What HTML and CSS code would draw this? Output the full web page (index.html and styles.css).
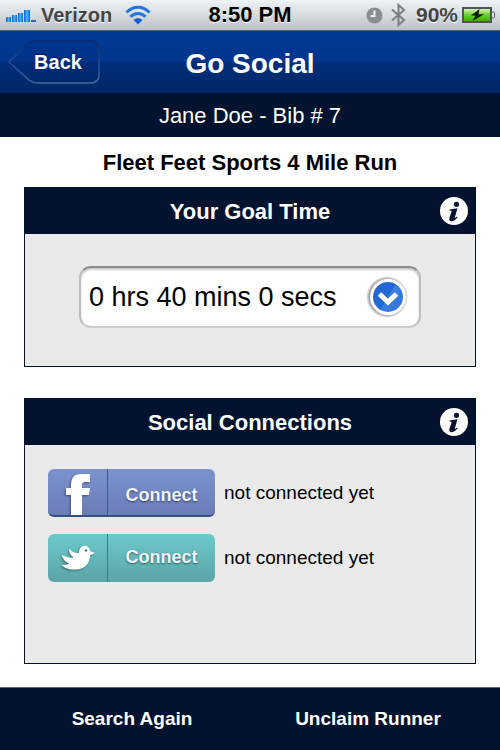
FILE: index.html
```html
<!DOCTYPE html>
<html lang="en">
  <head>
    <meta charset="UTF-8" />
    <meta name="viewport" content="width=device-width, initial-scale=1.0" />
    <title>Go Social</title>
    <link rel="stylesheet" href="styles.css">
  </head>
  <body>
    <div class="status-bar">
      <div class="status-left">
        <svg class="signal" width="32" height="16" viewBox="0 0 32 16">
          <defs>
            <linearGradient id="bars" x1="0" x2="1" y1="0" y2="0">
              <stop offset="0" stop-color="#1463c4" />
              <stop offset="0.5" stop-color="#4bb4f6" />
              <stop offset="1" stop-color="#1463c4" />
            </linearGradient>
          </defs>
          <g fill="url(#bars)">
            <rect x="1" y="10" width="5" height="5" />
            <rect x="7" y="8" width="5" height="7" />
            <rect x="13" y="6" width="5" height="9" />
            <rect x="19" y="3" width="6" height="12" />
          </g>
          <rect x="26" y="13" width="5" height="2" fill="#3566a8" />
        </svg>
        <span class="carrier">Verizon</span>
        <svg class="wifi" width="26" height="20" viewBox="0 0 26 20">
          <g fill="none" stroke="#2476dc" stroke-width="3">
            <path d="M1.5 7.5C8 0.5 18 0.5 24.5 7.5" />
            <path d="M5.5 11.7C9.5 7.300 16.5 7.300 20.5 11.7" />
          </g>
          <path d="M8.5 15C11 12.5 15 12.5 17.5 15L13 19.500Z" fill="#1a5fd0" />
        </svg>
      </div>
      <span class="clock">8:50 PM</span>
      <div class="status-right">
        <svg width="17" height="17" viewBox="0 0 17 17">
          <circle cx="8.5" cy="8.5" r="8" fill="#888f92" />
          <path d="M8.5 3.5V9H4.5" fill="none" stroke="#eef1f2" stroke-width="2" />
        </svg>
        <svg class="bluetooth" width="15" height="24" viewBox="0 0 15 24">
          <path d="M1 6.5L13 17L7.5 22V2L13 7L1 17.5" fill="none" stroke="#7c7f82" stroke-width="2" />
        </svg>
        <span class="percent">90%</span>
        <svg width="33" height="16" viewBox="0 0 33 16">
          <defs>
            <linearGradient id="charge" x1="0" x2="0" y1="0" y2="1">
              <stop offset="0" stop-color="#c8f09a" />
              <stop offset="0.4" stop-color="#6fd03b" />
              <stop offset="1" stop-color="#40a81c" />
            </linearGradient>
          </defs>
          <rect x="1" y="1" width="28" height="14" fill="#c9ecb4" stroke="#4d555a" stroke-width="2" />
          <rect x="2" y="3" width="26" height="11" fill="url(#charge)" />
          <path d="M30 5h1.5q1 0 1 1v4q0 1 -1 1h-1.5" fill="#dfe4e6" stroke="#5a6268" />
          <path d="M17.5 2L9 8.5H13.500L10.5 14L22 7.300H16.5Z" fill="#0b1a06" />
        </svg>
      </div>
    </div>

    <header class="nav-bar">
      <button class="back" type="button">
        <svg class="back-shape" width="92" height="46" viewBox="0 0 92 46">
          <defs>
            <linearGradient id="back-line" x1="0" x2="0" y1="0" y2="1">
              <stop offset="0" stop-color="#062a6c" />
              <stop offset="0.4" stop-color="#1b4690" />
              <stop offset="1" stop-color="#4568a4" />
            </linearGradient>
          </defs>
          <path d="M1 23L18 6Q22 2 27 2H82Q91 2 91 11V36Q91 44 82 44H30Q25 44 21 41Z" fill="#001f60" fill-opacity="0.1" stroke="url(#back-line)" stroke-width="1.5" />
        </svg>
        <span class="back-text">Back</span>
      </button>
      <h1>Go Social</h1>
    </header>
    <div class="runner">Jane Doe - Bib # 7</div>

    <main>
      <h2 class="race">Fleet Feet Sports 4 Mile Run</h2>

      <section class="panel goal">
        <div class="panel-header">
          <h3><label for="goal-time">Your Goal Time</label></h3>
          <button class="info" type="button" aria-label="About goal time">
            <svg width="28" height="28" viewBox="0 0 28 28">
              <circle cx="14" cy="14" r="14" fill="#fff" />
              <circle cx="16.5" cy="7.3" r="2.6" fill="#02132f" />
              <path d="M9.500 12.5L17.5 11.3L14.8 20.5Q14.500 21.8 17 19.5L17.6 20.2Q14.3 24.600 11 24.300Q8.500 23.800 9.5 20.5L11.6 14.5Q12 13.4 9.500 13.5Z" fill="#02132f" />
            </svg>
          </button>
        </div>
        <div class="panel-body">
          <div class="select-box">
            <select id="goal-time">
              <option>0 hrs 40 mins 0 secs</option>
            </select>
            <svg class="select-arrow" width="44" height="44" viewBox="0 0 44 44">
              <defs>
                <linearGradient id="arrow-fill" x1="0" x2="1" y1="0.2" y2="0.8">
                  <stop offset="0.5" stop-color="#2268d4" />
                  <stop offset="0.5" stop-color="#3d80de" />
                  <stop offset="1" stop-color="#2f74dc" />
                </linearGradient>
                <radialGradient id="arrow-shadow">
                  <stop offset="0.8" stop-color="#8a8a8a" />
                  <stop offset="1" stop-color="#8a8a8a" stop-opacity="0" />
                </radialGradient>
              </defs>
              <circle cx="21" cy="22" r="21" fill="url(#arrow-shadow)" />
              <circle cx="22" cy="22" r="18" fill="#fff" />
              <circle cx="22" cy="22" r="15" fill="url(#arrow-fill)" />
              <path d="M13.5 19L22 27L30.5 19" fill="none" stroke="#fff" stroke-width="5" />
            </svg>
          </div>
        </div>
      </section>

      <section class="panel social">
        <div class="panel-header">
          <h3>Social Connections</h3>
          <button class="info" type="button" aria-label="About social connections">
            <svg width="28" height="28" viewBox="0 0 28 28">
              <circle cx="14" cy="14" r="14" fill="#fff" />
              <circle cx="16.5" cy="7.3" r="2.6" fill="#02132f" />
              <path d="M9.500 12.5L17.5 11.3L14.8 20.5Q14.500 21.8 17 19.5L17.6 20.2Q14.3 24.600 11 24.300Q8.500 23.800 9.5 20.5L11.6 14.5Q12 13.4 9.500 13.5Z" fill="#02132f" />
            </svg>
          </button>
        </div>
        <div class="panel-body connections">
          <div class="connection">
            <button class="connect facebook" type="button">
              <span class="connect-icon">
                <svg width="28" height="44" viewBox="0 0 28 44">
                  <path d="M7 44V24H2V17H7V14Q7 3 17 3H26V11H21Q18 11 18 14V17H26L25 24H18V44Z" fill="#fff" />
                </svg>
              </span>
              <span class="connect-text">Connect</span>
            </button>
            <span class="connection-state">not connected yet</span>
          </div>
          <div class="connection">
            <button class="connect twitter" type="button">
              <span class="connect-icon">
                <svg width="36" height="28" viewBox="0 0 36 28">
                  <path d="M2 11C7 13.500 11 14 13.500 13.500C10 11 9 8 9 4.500C12 8 15 9.500 19 9C19 4 22 1 26 2C28.500 2.500 30 4.500 30 7L35 9L30 11.500C30 19 25 25.500 16 25.500C9.500 26 4 24 1 20.500C4.500 21.500 7.500 21 9 19.500C5.500 18 2.500 15 2 11Z" fill="#fff" />
                  <circle cx="26" cy="6.500" r="1.200" fill="#397d83" />
                </svg>
              </span>
              <span class="connect-text">Connect</span>
            </button>
            <span class="connection-state">not connected yet</span>
          </div>
        </div>
      </section>
    </main>

    <footer>
      <a href="#">Search Again</a>
      <a href="#">Unclaim Runner</a>
    </footer>
  </body>
</html>
```
FILE: styles.css
```css
* {
  box-sizing: border-box;
}

body {
  margin: 0;
  min-height: 100vh;
  display: flex;
  flex-direction: column;
  background: #ffffff;
  color: #000000;
  font-family: "Liberation Sans", Arial, Helvetica, sans-serif;
}

h1,
h2,
h3 {
  margin: 0;
  font-weight: bold;
}

button {
  padding: 0;
  border: none;
  background: transparent;
  font-family: inherit;
  cursor: pointer;
}

svg {
  display: block;
  flex: none;
}

/* status bar */
.status-bar {
  display: grid;
  grid-template-columns: 1fr auto 1fr;
  align-items: center;
  height: 31px;
  padding: 0 5px;
  background: linear-gradient(#eef3f5, #bcc3c7);
  border-bottom: 1px solid #50607a;
  color: #444444;
  font-weight: bold;
  text-shadow: 0 1px 0 #ffffff;
}

.status-left,
.status-right {
  display: flex;
  align-items: center;
}

.status-right {
  justify-content: flex-end;
  gap: 8px;
}

.signal {
  margin-right: 4px;
}

.carrier {
  font-size: 20px;
}

.wifi {
  margin-left: 13px;
}

.clock {
  color: #000000;
  font-size: 22px;
}

.percent {
  margin: 0 -4px 0 2px;
  font-size: 21px;
}

/* title bar */
.nav-bar {
  display: grid;
  grid-template-columns: 1fr auto 1fr;
  align-items: center;
  height: 62px;
  padding: 0 8px;
  background: linear-gradient(#003a98, #02358c 48%, #012e78 52%, #012868);
  color: #ffffff;
}

.nav-bar h1 {
  padding-top: 4px;
  font-size: 28px;
}

.back {
  display: grid;
  justify-self: start;
  align-items: center;
  color: #ffffff;
  font-size: 20px;
  font-weight: bold;
}

.back-shape,
.back-text {
  grid-area: 1 / 1;
}

.back-text {
  padding-left: 8px;
  text-shadow: 0 -1px 1px #001a4a;
}

.runner {
  height: 44px;
  background: #02132f;
  color: #ffffff;
  font-size: 22px;
  line-height: 46px;
  text-align: center;
}

/* content */
main {
  flex: 1;
  padding: 0 24px 23px;
}

.race {
  padding-top: 2px;
  font-size: 22px;
  line-height: 48px;
  text-align: center;
}

.panel {
  border: 1px solid #02132f;
  background: #eaeaea;
}

.panel + .panel {
  margin-top: 31px;
}

.panel-header {
  display: grid;
  grid-template-columns: 1fr auto 1fr;
  align-items: center;
  height: 46px;
  padding: 0 7px;
  background: #02132f;
  color: #ffffff;
}

.panel-header h3 {
  grid-column: 2;
  padding-top: 2px;
  font-size: 22px;
}

.info {
  justify-self: end;
}

.goal .panel-body {
  padding: 32px 54px 38px;
}

.select-box {
  position: relative;
}

.select-box select {
  display: block;
  width: 100%;
  height: 62px;
  padding: 0 60px 0 8px;
  border: 2px solid #bdbdbd;
  border-top-color: #8c8c8c;
  border-bottom-color: #cccccc;
  border-radius: 12px;
  background: #ffffff;
  box-shadow: inset 0 2px 2px #cccccc;
  color: #000000;
  font-family: inherit;
  font-size: 27px;
  appearance: none;
}

.select-arrow {
  position: absolute;
  top: 9px;
  right: 11px;
  pointer-events: none;
}

.connections {
  display: flex;
  flex-direction: column;
  gap: 17px;
  min-height: 218px;
  padding: 24px 23px;
}

.connection {
  display: flex;
  align-items: center;
  gap: 9px;
}

.connection-state {
  font-size: 19px;
}

.connect {
  display: flex;
  width: 167px;
  height: 48px;
  border-radius: 6px;
  overflow: hidden;
  color: #eef4ff;
  font-size: 18px;
  font-weight: bold;
  line-height: 48px;
}

.connect-icon {
  display: flex;
  align-items: center;
  justify-content: center;
  width: 60px;
  height: 100%;
  border-right: 1px solid #3b5a92;
}

.connect-icon svg {
  filter: drop-shadow(-1px 1px 1px rgba(0, 0, 0, 0.4));
}

.connect-text {
  flex: 1;
  padding-top: 2px;
  text-shadow: 0 1px 2px rgba(0, 0, 0, 0.5);
}

.facebook {
  background: linear-gradient(#7b93cc, #6a7cb9);
  border-bottom: 2px solid #34507e;
}

.facebook .connect-icon {
  align-items: flex-end;
}

.twitter {
  background: linear-gradient(#6cc9cb, #5aa5a8);
}

.twitter .connect-icon {
  border-right-color: #337f86;
}

.twitter .connect-text {
  padding-top: 0;
  line-height: 46px;
}

footer {
  display: grid;
  grid-template-columns: 1fr 1fr;
  padding: 0 14px;
  border-top: 1px solid #5a6578;
  background: #02132f;
  line-height: 62px;
  text-align: center;
}

footer a {
  color: #ffffff;
  font-size: 19px;
  font-weight: bold;
  text-decoration: none;
}
```
